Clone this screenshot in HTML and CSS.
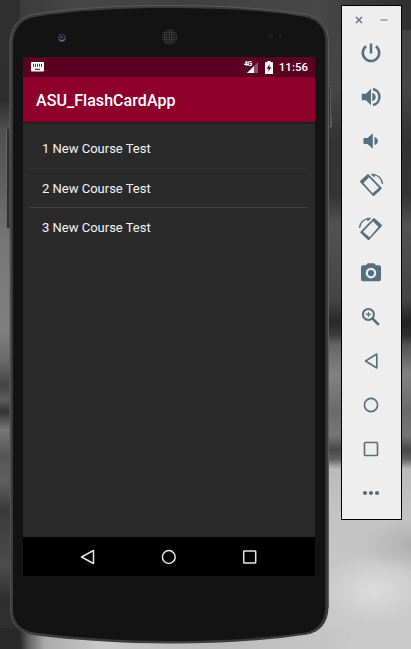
FILE: index.html
```
<!DOCTYPE html>
<html lang="en">
<head>
<meta charset="utf-8">
<title>ASU_FlashCardApp</title>
<link rel="stylesheet" href="styles.css">
</head>
<body>
<main class="desktop">
  <section class="phone">
    <svg class="phone-shell" viewBox="0 0 335 649" aria-hidden="true">
      <defs>
        <pattern id="mesh" width="2.4" height="2.4" patternUnits="userSpaceOnUse">
          <rect width="2.4" height="2.4" fill="#191919"/>
          <circle cx="1.2" cy="1.2" r=".75" fill="#505050"/>
        </pattern>
      </defs>
      <path d="M9.5 128H7.5Q6.500 128 6.500 130V228.500H11" fill="#303030" stroke="#686868"/>
      <path d="M327 86.500H330.500V126H327M331.500 116V127H328" fill="#303030" stroke="#5c5c5c"/>
      <path d="M10 45C10 27 18 18 33 14.500C76 7.500 125 5.500 170 5.500C218 5.500 265 8 306 14.500C321 18 328.500 27 328.500 42V608C328 623 320 632 307 634.500C263 641 218 643.500 170 643.500C124 643.500 77 640.500 33 635C18 632 11 624 10.500 610Z" fill="#3b3b3b"/>
      <path d="M10 500V45C10 27 18 18 33 14.500C76 7.500 125 5.500 170 5.500C218 5.500 265 8 306 14.500C321 18 328.500 27 328.500 42V608" fill="none" stroke="#5c5c5c"/>
      <path d="M10.500 500V610C11 624 18 632 33 635" fill="none" stroke="#505050"/>
      <path d="M13 45C13 29 20 20 34 17C76 10 125 8 170 8C218 8 264 10 305 17C319 20 325.500 29 325.500 43V607C325.500 621 318 630 306 632.500C263 638.500 218 641 170 641C124 641 77 638 34 632.500C20 630 13 622 13 609Z" fill="#131313"/>
      <circle cx="62" cy="37.800" r="4" fill="#373a40"/>
      <circle cx="62" cy="37.200" r="2.400" fill="#141832"/>
      <circle cx="61.500" cy="37" r="1.100" fill="#4b55b4"/>
      <path d="M60 40.500Q62.500 42 64.800 39.500" fill="none" stroke="#85837f"/>
      <circle cx="169.500" cy="37" r="7.500" fill="url(#mesh)"/>
      <circle cx="270" cy="36.500" r="2.800" fill="#1c1c1c"/>
      <circle cx="280.500" cy="36.500" r="1.800" fill="#1d1d1d"/>
    </svg>
    <div class="screen">
      <header class="status-bar">
        <svg class="keyboard" viewBox="0 0 13 10"><rect width="13" height="9.600" rx="1" fill="#fff"/><path d="M2 3.300h9" stroke="#5b0020" stroke-width="3" stroke-dasharray="1 1" stroke-opacity=".85"/><path d="M4 7.300h5" stroke="#5b0020"/></svg>
        <div class="status-right">
          <div class="signal"><span class="network">4G</span><svg viewBox="0 0 11 11"><path d="M11 0V11H0Z" fill="#8c5167"/><path d="M7 4V11H0Z" fill="#fff"/></svg></div>
          <svg class="battery" viewBox="0 0 8 13"><path d="M2.300 0h3.400v1.300H8V13H0V1.300h2.300Z" fill="#fff"/><path d="M4.700 3L1.600 7.700H3.700L3.200 11L6.400 6.300H4.300Z" fill="#5b0020"/></svg>
          <time>11:56</time>
        </div>
      </header>
      <h1 class="app-bar">ASU_FlashCardApp</h1>
      <ul class="course-list">
        <li>1 New Course Test</li>
        <li class="pronounced">2 New Course Test</li>
        <li>3 New Course Test</li>
      </ul>
      <nav class="nav-bar">
        <svg viewBox="0 0 16 16"><path d="M13.500 1.500V14.500L1.500 8Z"/></svg>
        <svg viewBox="0 0 16 16"><circle cx="7.800" cy="8" r="6.400"/></svg>
        <svg viewBox="0 0 16 16"><rect x="1.700" y="2" width="12" height="12" rx=".6"/></svg>
      </nav>
    </div>
  </section>
  <aside class="toolbar">
    <div class="window-controls">
      <svg viewBox="0 0 8 8"><path d="M1 1L7 7M7 1L1 7" stroke="#5f7c8b" stroke-width="1.500"/></svg>
      <svg viewBox="0 0 8 8"><path d="M0.500 4H7.500" stroke="#94a8b3" stroke-width="1.700"/></svg>
    </div>
    <div class="tool"><svg viewBox="0 0 24 24"><path class="line bold" d="M12 2.500V12.500M7.100 5.200A8.200 8.200 0 1 0 16.900 5.200"/></svg></div>
    <div class="tool"><svg viewBox="0 0 24 24"><path d="M2.800 8.800H7L12 3.800V20.200L7 15.200H2.800Z"/><path d="M13.300 7.700Q16.700 9 16.700 12T13.300 16.300Z"/><path class="line bold" d="M14 4A8.200 8.200 0 0 1 14 20"/></svg></div>
    <div class="tool"><svg viewBox="0 0 24 24"><path d="M4.500 9H8.500L13.800 4.200V19.800L8.500 15H4.500Z"/><path d="M15.500 8Q18.800 9 18.800 12T15.500 16Z"/></svg></div>
    <div class="tool"><svg viewBox="0 0 24 24"><g id="rotate"><path fill-rule="evenodd" d="M8.200 1.400L1.300 7.800Q.6 8.500 1.300 9.200L13.800 22.700Q14.500 23.400 15.200 22.700L22.400 16Q23.100 15.300 22.400 14.600L9.700 1.400Q9 .7 8.200 1.400ZM10 4.300L20 14.700L13.500 20.200L4.500 10Z"/><path class="line arc" d="M13 1.600C18.700 1.200 23 5.300 23.500 11"/><path d="M11.500 .7L16.500 1L15.300 4.600Z"/></g></svg></div>
    <div class="tool"><svg class="mirrored" viewBox="0 0 24 24"><use href="#rotate"/></svg></div>
    <div class="tool"><svg viewBox="0 0 24 24"><path fill-rule="evenodd" d="M8.700 2.300L7 4.300H4Q2 4.300 2 6.300V18.300Q2 20.300 4 20.300H20Q22 20.300 22 18.300V6.300Q22 4.300 20 4.300H17L15.300 2.300ZM12 6.800A5.300 5.300 0 1 1 12 17.400A5.300 5.300 0 1 1 12 6.800M12 9A3.100 3.100 0 1 0 12 15.200A3.100 3.100 0 1 0 12 9"/></svg></div>
    <div class="tool"><svg viewBox="0 0 24 24"><circle class="line" cx="9.400" cy="9.400" r="5.500"/><path class="line bold" d="M13.500 13.500L19.800 19.800"/><path class="line thin" d="M6.800 9.400H12M9.400 6.800V12"/></svg></div>
    <div class="tool"><svg viewBox="0 0 24 24"><path class="line light" d="M17.800 5V19L6.500 12Z"/></svg></div>
    <div class="tool"><svg viewBox="0 0 24 24"><circle class="line light" cx="12" cy="12" r="6.600"/></svg></div>
    <div class="tool"><svg viewBox="0 0 24 24"><rect class="line light" x="5.500" y="5.500" width="13" height="13" rx=".8"/></svg></div>
    <div class="tool"><svg viewBox="0 0 24 24"><circle cx="6" cy="12" r="2.100"/><circle cx="12" cy="12" r="2.100"/><circle cx="18" cy="12" r="2.100"/></svg></div>
  </aside>
</main>
</body>
</html>
```
FILE: styles.css
```
* { box-sizing: border-box; }
body { margin: 0; font-family: Roboto, sans-serif; }
svg { display: block; overflow: visible; }

.desktop {
  display: flex;
  align-items: flex-start;
  width: 411px;
  height: 649px;
  overflow: hidden;
  background:
    linear-gradient(90deg, #292929 0 20px, #666 29px, #aaa 45px, #c9c9c9 100px, #bbb 220px, #c8c8c8) 0 628px / 350px 21px no-repeat,
    linear-gradient(#303030, #2d2d2d 100px, #505050 130px, #606060 185px, #777 245px, #808080 330px, #6a6a6a 360px, #444 385px, #5c5c5c 400px, #333 412px, #777 430px, #555 455px, #606060 480px, #3a3a3a 510px, #4c4c4c 565px, #2e2e2e 600px, #303030) 0 0 / 20px 649px no-repeat,
    radial-gradient(ellipse 55px 35px at 375px 590px, #dcdcdc, transparent) no-repeat,
    radial-gradient(ellipse 50px 28px at 411px 545px, #b0b0b0, transparent) no-repeat,
    linear-gradient(transparent 300px, rgba(0,0,0,.25) 335px, transparent 370px) 402px 0 / 9px 649px no-repeat,
    linear-gradient(90deg, #383838, #474747 80px, #404040 180px, #484848 320px, #3c3c3c 355px, #303030) 0 0 / 411px 30px no-repeat,
    linear-gradient(#434343 0, #464646 90px, #333 140px, #343434 195px, #525252 225px, #4d4d4d 255px, #444 300px, #292929 322px, #3c3c3c 335px, #666 345px, #818181 375px, #6b6b6b 410px, #767676 435px, #484848 450px, #606060 459px, #bababa 469px, #c4c4c4 520px, #cacaca);
}

.phone { position: relative; flex: 0 0 341px; padding: 57px 0 0 23px; }
.phone-shell { position: absolute; top: 0; left: 0; width: 335px; height: 649px; }
.screen {
  position: relative;
  display: flex;
  flex-direction: column;
  width: 292px;
  height: 519px;
  background: #2a2a2a;
}

.status-bar {
  display: flex;
  justify-content: space-between;
  align-items: center;
  height: 20px;
  padding: 0 7px 0 8px;
  background: #5b0020;
  color: #fff;
}
.keyboard { width: 13px; height: 10px; }
.status-right { display: flex; align-items: center; }
.signal { display: flex; align-items: flex-start; margin-right: 7px; }
.network { margin-right: -5px; font-size: 7px; font-weight: 700; line-height: 5px; letter-spacing: -.5px; z-index: 1; }
.signal svg { width: 11px; height: 11px; }
.battery { width: 8px; height: 13px; margin-right: 6px; }
time { font-size: 11.5px; font-weight: 500; line-height: 20px; }

.app-bar {
  z-index: 1;
  height: 45px;
  margin: 0;
  padding-left: 13px;
  background: #8e002c;
  color: #fff;
  font-size: 16px;
  font-weight: 500;
  line-height: 47px;
  letter-spacing: .06px;
  box-shadow: 0 1px 2px rgba(0,0,0,.5);
}
.course-list { flex: 1; margin: 0; padding: 7px 7px 0 6px; list-style: none; }
.course-list li {
  height: 39.500px;
  padding-left: 13px;
  border-bottom: 1px solid #303030;
  color: #f5f5f5;
  font-size: 13px;
  line-height: 39px;
}
.course-list .pronounced { border-color: #3f3f3f; }
.course-list li:last-child { border-color: #2c2c2c; }

.nav-bar {
  display: flex;
  justify-content: space-between;
  align-items: center;
  height: 39px;
  padding: 0 57px;
  background: #000;
}
.nav-bar svg { width: 16px; height: 16px; fill: none; stroke: #e5e5e5; stroke-width: 1.500; stroke-linejoin: round; }

.toolbar {
  width: 61px;
  height: 515px;
  margin-top: 5px;
  border: 1px solid #000;
  background: #eee;
}
.window-controls { display: flex; justify-content: center; align-items: center; gap: 17px; height: 25px; padding: 3px 1px 0 0; }
.window-controls svg { width: 8px; height: 8px; }
.tool { display: flex; justify-content: center; align-items: center; height: 44px; padding-right: 1px; }
.tool svg { width: 24px; height: 24px; fill: #546f7e; }
.tool .mirrored { transform: scaleX(-1); }
.line { fill: none; stroke: #546f7e; stroke-width: 2; stroke-linejoin: round; }
.bold { stroke-width: 2.500; }
.arc { stroke-width: 1.300; }
.thin { stroke-width: 1.100; }
.light { stroke-width: 1.600; }
```
